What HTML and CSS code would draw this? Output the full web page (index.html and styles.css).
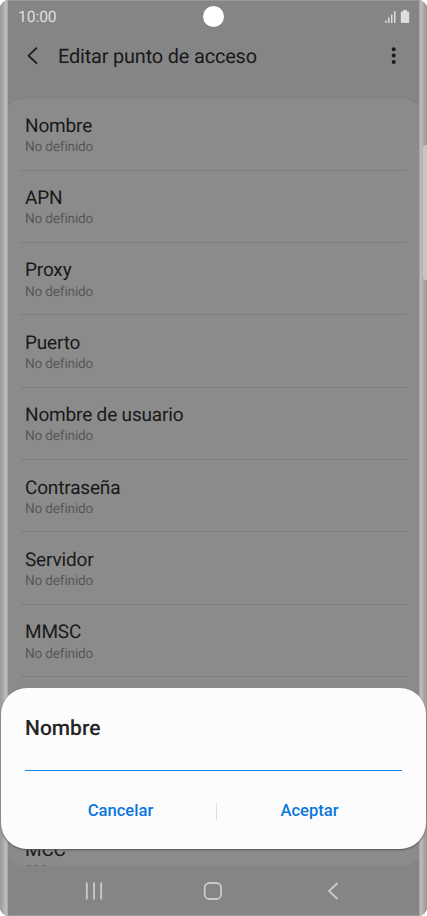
FILE: index.html
```
<!DOCTYPE html>
<html lang="es">
<head>
<meta charset="utf-8">
<title>Editar punto de acceso</title>
<link rel="stylesheet" href="styles.css">
</head>
<body>
<div class="phone">
  <header class="status">
    <span class="clock">10:00</span>
    <span class="camera"></span>
    <svg class="status-icons" width="26" height="14" viewBox="0 0 26 14"><path d="M1 10.5h1.5V13H1zM4 7.5h1.5V13H4zM7 4.5h1.5V13H7zM10 1.2h1.5V13H10z"/><path d="M19.2 0h3.6v1.4h1.4q1 0 1 1V12q0 1-1 1h-6.4q-1 0-1-1V2.400q0-1 1-1h1.400z"/></svg>
  </header>
  <div class="bar">
    <svg class="back" width="14" height="20" viewBox="0 0 14 20"><path d="M12 1.700 3.500 9.700 12 17.700"/></svg>
    <h1>Editar punto de acceso</h1>
    <svg class="more" width="6" height="20" viewBox="0 0 6 20"><circle cx="2.700" cy="3.200" r="2"/><circle cx="2.700" cy="9.600" r="2"/><circle cx="2.700" cy="16" r="2"/></svg>
  </div>
  <main class="card">
    <div class="row"><b>Nombre</b><span>No definido</span></div>
    <div class="row"><b>APN</b><span>No definido</span></div>
    <div class="row"><b>Proxy</b><span>No definido</span></div>
    <div class="row"><b>Puerto</b><span>No definido</span></div>
    <div class="row"><b>Nombre de usuario</b><span>No definido</span></div>
    <div class="row"><b>Contraseña</b><span>No definido</span></div>
    <div class="row"><b>Servidor</b><span>No definido</span></div>
    <div class="row"><b>MMSC</b><span>No definido</span></div>
    <div class="row"></div>
    <div class="row"></div>
    <div class="row"><b>MCC</b><span>222</span></div>
  </main>
  <nav class="nav">
    <svg width="18" height="18" viewBox="0 0 18 18"><path d="M1.800.500v17M9 .500v17M16.200.500v17"/></svg>
    <svg width="20" height="18" viewBox="0 0 20 18"><rect x="1.700" y="1" width="16.400" height="16" rx="4.800"/></svg>
    <svg width="12" height="18" viewBox="0 0 12 18"><path d="M10.500 1 2 9l8.500 8"/></svg>
  </nav>
  <div class="edge left"></div>
  <div class="edge right"></div>
  <div class="side-handle"></div>
  <section class="dialog">
    <h2>Nombre</h2>
    <div class="field"></div>
    <div class="actions"><button>Cancelar</button><i></i><button>Aceptar</button></div>
  </section>
</div>
</body>
</html>
```
FILE: styles.css
```
* { box-sizing: border-box; }
body { margin: 0; background: #fff; font-family: Roboto, sans-serif; text-rendering: geometricPrecision; }
.phone {
  position: relative;
  display: flex;
  flex-direction: column;
  width: 427px;
  height: 916px;
  overflow: hidden;
  border-radius: 9px;
  background: #858585;
  box-shadow: inset 0 1px #999, inset 0 -1px #999;
}
.status {
  display: grid;
  grid-template-columns: 1fr 21px 1fr;
  align-items: center;
  height: 33px;
  padding: 0 17px 0 18px;
}
.clock { font-size: 15.700px; letter-spacing: -0.100px; line-height: 33px; color: #dedede; }
.camera { width: 21px; height: 21px; margin-left: -0.500px; border-radius: 50%; background: #fff; }
.status-icons { justify-self: end; fill: #dedede; }
.bar { display: flex; align-items: center; height: 64.500px; padding: 0 30px 18px 25px; }
.back { fill: none; stroke: #1c1c1c; stroke-width: 1.800; }
.bar h1 { flex: 1; margin: 2px 0 0 19px; font-size: 19.900px; letter-spacing: -0.160px; font-weight: 400; line-height: 24px; color: #191919; }
.more { fill: #1c1c1c; }
.card {
  height: 768px;
  flex: none;
  overflow: hidden;
  border-radius: 27px;
  background: #8b8b8b;
  box-shadow: 0 -1px #808080;
}
.row {
  display: flex;
  flex-direction: column;
  height: 72.400px;
  margin: 0 20.500px;
  padding: 15.600px 4.500px 0;
  border-bottom: 1px solid #7d7d7d;
}
.row:first-child { height: 73px; padding-top: 16.100px; }
.row b { font-size: 19px; letter-spacing: -0.170px; font-weight: 400; line-height: 23px; color: #191919; }
.row span { margin-top: 1.100px; font-size: 13.600px; letter-spacing: -0.170px; line-height: 19px; color: #585858; }
.nav { display: flex; justify-content: space-between; align-items: center; flex: 1; padding: 0 87.500px 0 85px; }
.nav svg { fill: none; stroke: #cacaca; stroke-width: 1.800; }
.nav svg:nth-child(2) { margin-left: -3.800px; }
.edge { position: absolute; top: 0; bottom: 0; width: 8px; }
.left { left: 0; background: linear-gradient(90deg, #9c9c9c, #a6a6a6 35%, #bcbcbc 65%, #b8b8b8 90%, #929292); }
.right { right: 0; background: linear-gradient(270deg, #999, #a4a4a4 35%, #b8b8b8 65%, #bababa 88%, #929292); }
.side-handle { position: absolute; right: 0; top: 145px; width: 4px; height: 135px; border-radius: 3px 0 0 3px; background: #c6c6c6; }
.dialog {
  position: absolute;
  left: 1px;
  top: 688px;
  width: 425px;
  height: 161px;
  padding: 27px 24px 0;
  border-radius: 26px;
  background: #fcfcfc;
  box-shadow: 0 1px 2px #555;
}
.dialog h2 { margin: 0; font-size: 21px; font-weight: 500; line-height: 28px; color: #252525; }
.field { height: 28px; border-bottom: 1.500px solid #1c86ea; }
.actions { display: grid; grid-template-columns: 191px 1px 185px; align-items: center; height: 80px; }
.actions button { padding: 0; border: 0; background: none; font: 500 16.600px/20px Roboto, sans-serif; color: #0b76dc; }
.actions i { height: 17px; background: #dedede; }
```
